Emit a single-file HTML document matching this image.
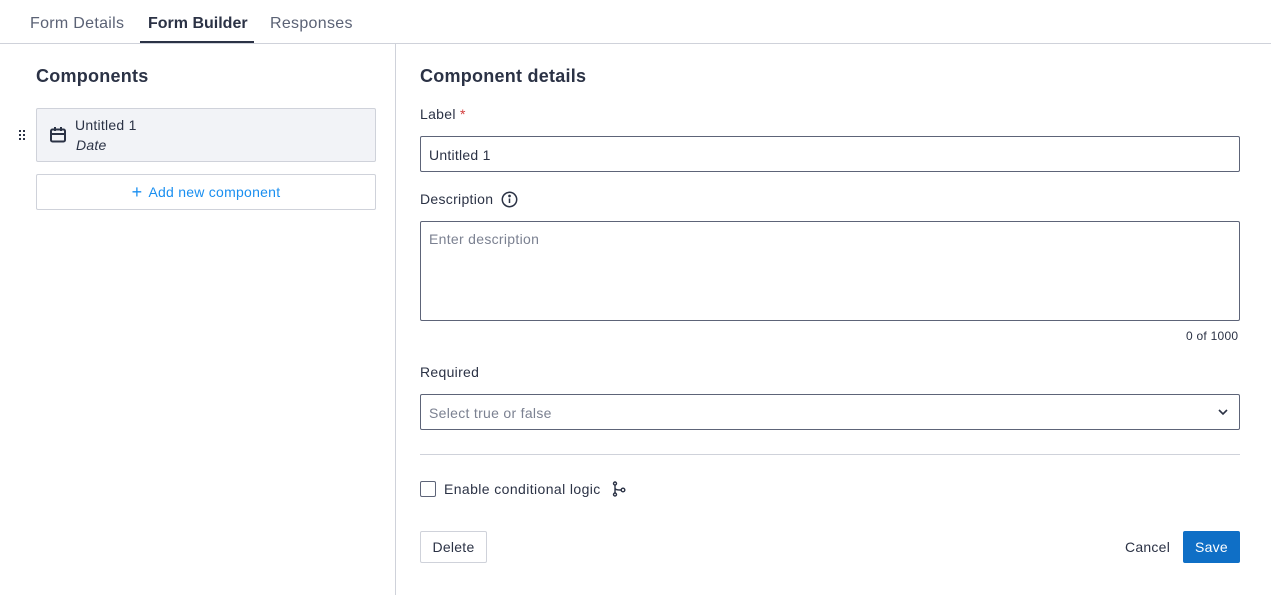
<!DOCTYPE html>
<html><head><meta charset="utf-8"><style>
*{box-sizing:border-box;margin:0;padding:0}
body{width:1271px;height:595px;background:#fff;font-family:"Liberation Sans",sans-serif;color:#2b3245;position:relative;overflow:hidden;font-size:14px;letter-spacing:0.25px}
.a{position:absolute}
.tab{position:absolute;top:15px;font-size:16px;color:#5b6275;letter-spacing:0.3px}
.inp{position:absolute;border:1px solid #5d6478;border-radius:2px;background:#fff}
.ph{color:#7b8191;font-size:14px;letter-spacing:0.3px}
</style></head><body>
<div class="tab" style="left:30px">Form Details</div>
<div class="tab" style="left:148px;color:#2b3245;font-weight:bold;letter-spacing:0">Form Builder</div>
<div class="tab" style="left:270px">Responses</div>
<div class="a" style="left:140px;top:41px;width:114px;height:3px;background:#2b3245"></div>
<div class="a" style="left:0;top:43px;width:1271px;height:1px;background:#cfd2da"></div>
<div class="a" style="left:395px;top:44px;width:1px;height:551px;background:#cfd2da"></div>

<div class="a" style="left:36px;top:66px;font-size:18px;font-weight:bold">Components</div>
<svg class="a" style="left:19px;top:130px" width="8" height="10"><g fill="#2b3245"><rect x="0" y="0" width="2" height="2"/><rect x="4" y="0" width="2" height="2"/><rect x="0" y="4" width="2" height="2"/><rect x="4" y="4" width="2" height="2"/><rect x="0" y="8" width="2" height="2"/><rect x="4" y="8" width="2" height="2"/></g></svg>
<div class="a" style="left:36px;top:108px;width:340px;height:54px;background:#f2f3f7;border:1px solid #cfd2da;border-radius:2px"></div>
<svg class="a" style="left:50px;top:127px" width="16" height="16" fill="none" stroke="#2b3245" stroke-width="2"><rect x="1" y="2.5" width="14" height="12" rx="1.5"/><path d="M1 7h14M5 0v4M11 0v4"/></svg>
<div class="a" style="left:75px;top:117px">Untitled 1</div>
<div class="a" style="left:76px;top:137px;font-style:italic">Date</div>
<div class="a" style="left:36px;top:174px;width:340px;height:36px;border:1px solid #cfd2da;border-radius:2px;text-align:center;line-height:34px;color:#1a8ff0">
<span style="font-size:18px;vertical-align:-1px;margin-right:6px">+</span>Add new component</div>

<div class="a" style="left:420px;top:66px;font-size:18px;font-weight:bold">Component details</div>
<div class="a" style="left:420px;top:106px;letter-spacing:0.3px">Label <span style="color:#d23c3c">*</span></div>
<div class="inp" style="left:420px;top:136px;width:820px;height:36px;padding:10px 8px">Untitled 1</div>
<div class="a" style="left:420px;top:191px;letter-spacing:0.3px">Description</div>
<svg class="a" style="left:501px;top:191px" width="17" height="17" fill="none" stroke="#2b3245" stroke-width="1.5"><circle cx="8.5" cy="8.5" r="7.2"/><path d="M8.5 7.5v4.5"/><circle cx="8.5" cy="5" r=".6" fill="#2b3245"/></svg>
<div class="inp" style="left:420px;top:221px;width:820px;height:100px;padding:9px 8px"><span class="ph">Enter description</span></div>
<div class="a" style="left:1186px;top:329px;font-size:12px">0 of 1000</div>
<div class="a" style="left:420px;top:364px;letter-spacing:0.3px">Required</div>
<div class="inp" style="left:420px;top:394px;width:820px;height:36px;padding:10px 8px"><span class="ph">Select true or false</span></div>
<svg class="a" style="left:1218px;top:408px" width="10" height="8" fill="none" stroke="#2b3245" stroke-width="1.6"><path d="M1 2l4 4 4-4"/></svg>
<div class="a" style="left:420px;top:454px;width:820px;height:1px;background:#cfd2da"></div>
<div class="a" style="left:420px;top:481px;width:16px;height:16px;border:1px solid #5d6478;border-radius:2px"></div>
<div class="a" style="left:444px;top:481px;letter-spacing:0.4px">Enable conditional logic</div>
<svg class="a" style="left:612px;top:481px" width="14" height="16" fill="none" stroke="#2b3245" stroke-width="1.4"><circle cx="3" cy="2.5" r="1.5"/><circle cx="3" cy="13.5" r="1.5"/><circle cx="11" cy="9" r="1.8"/><path d="M3 4v8M3 7c0 2 3 2 6 2"/></svg>
<div class="a" style="left:420px;top:531px;width:67px;height:32px;border:1px solid #cfd2da;border-radius:2px;text-align:center;line-height:30px">Delete</div>
<div class="a" style="left:1125px;top:539px">Cancel</div>
<div class="a" style="left:1183px;top:531px;width:57px;height:32px;background:#0f6fc6;border-radius:2px;color:#fff;text-align:center;line-height:32px">Save</div>
</body></html>
